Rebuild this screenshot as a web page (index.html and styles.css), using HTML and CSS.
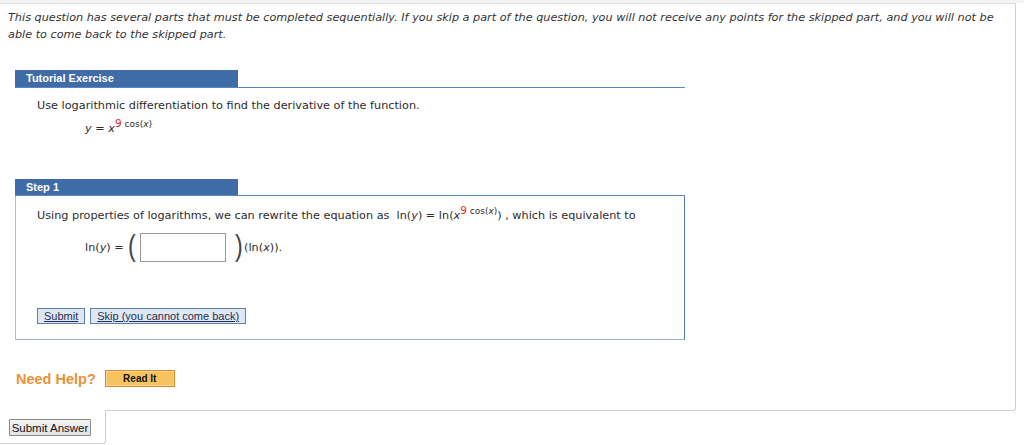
FILE: index.html
```html
<!DOCTYPE html>
<html>
<head>
<meta charset="utf-8">
<link rel="stylesheet" href="styles.css">
</head>
<body>
<div class="topstrip"></div>
<div class="question">
  <p class="notice">This question has several parts that must be completed sequentially. If you skip a part of the question, you will not receive any points for the skipped part, and you will not be able to come back to the skipped part.</p>

  <div class="section-head"><span class="tab">Tutorial Exercise</span></div>
  <div class="exercise">
    <p class="line">Use logarithmic differentiation to find the derivative of the function.</p>
    <p class="math"><i>y</i> = <i>x</i><sup><span class="red">9</span> cos(<i>x</i>)</sup></p>
  </div>

  <div class="section-head step-head"><span class="tab">Step 1</span></div>
  <div class="step-box">
    <p class="line">Using properties of logarithms, we can rewrite the equation as&nbsp; ln(<i>y</i>) = ln(<i>x</i><sup><span class="red">9</span> cos(<i>x</i>)</sup>) , which is equivalent to</p>
    <div class="eq-row">
      <span>ln(<i>y</i>) =</span>
      <span class="paren">(</span>
      <span class="answer-box"></span>
      <span class="paren">)</span><span>(ln(<i>x</i>)).</span>
    </div>
    <div class="step-buttons">
      <button class="blue-btn">Submit</button>
      <button class="blue-btn">Skip (you cannot come back)</button>
    </div>
  </div>

  <div class="help">
    <span class="need-help">Need Help?</span>
    <button class="read-it">Read It</button>
  </div>
</div>
<div class="answer-tab">
  <button class="submit-answer">Submit Answer</button>
</div>
</body>
</html>
```

FILE: styles.css
```css
html, body {
  margin: 0;
  padding: 0;
  background: #ffffff;
}
body {
  font-family: "DejaVu Sans", Verdana, sans-serif;
  font-size: 11.25px;
  color: #2b2b2b;
}
.topstrip {
  height: 3px;
  background: #f3f3f3;
}
.question {
  width: 1016px;
  box-sizing: border-box;
  border-top: 1px solid #dcdcdc;
  border-right: 1px solid #cfcfcf;
  border-bottom: 1px solid #cfcfcf;
  border-bottom-right-radius: 3px;
  padding-bottom: 23px;
}
.notice {
  margin: 0;
  padding: 5px 14px 0 8px;
  font-style: italic;
  line-height: 17px;
  color: #333;
}
.section-head {
  margin: 27px 0 0 15px;
  width: 670px;
  border-bottom: 1px solid #5b87c0;
  display: flex;
}
.tab {
  width: 212px;
  height: 17px;
  padding-left: 11px;
  background: #3f6ba6;
  color: #fff;
  font-family: "Liberation Sans", Arial, sans-serif;
  font-weight: bold;
  font-size: 11px;
  line-height: 17px;
}
.exercise {
  padding: 9px 0 0 37px;
}
.line {
  margin: 0;
  line-height: 17px;
}
.math {
  margin: 6px 0 0 48px;
  line-height: 17px;
}
sup {
  font-size: 9px;
  vertical-align: 5px;
  line-height: 0;
}
.red {
  color: #e32626;
  font-size: 10.5px;
}
.step-head {
  margin-top: 42px;
}
.step-head .tab {
  height: 16px;
  line-height: 16px;
}
.step-box {
  margin-left: 15px;
  width: 670px;
  box-sizing: border-box;
  border-left: 1px solid #a9bfdc;
  border-right: 1px solid #4c79b2;
  border-bottom: 1px solid #8fb0d8;
  padding: 11px 0 15px 21px;
}
.eq-row {
  display: flex;
  align-items: center;
  margin: 8px 0 0 48px;
  height: 30px;
}
.paren {
  font-family: "Liberation Sans", Arial, sans-serif;
  font-size: 29px;
  font-weight: normal;
  line-height: 30px;
  color: #444;
  transform: scaleX(0.8);
  margin: 0 0 2px 3px;
}
.answer-box {
  width: 84px;
  height: 27px;
  border: 1px solid #9a9a9a;
  background: #fff;
  margin: 0 5px 0 4px;
}
.step-buttons {
  margin-top: 46px;
  display: flex;
  gap: 5px;
}
.blue-btn {
  font-family: "Liberation Sans", Arial, sans-serif;
  font-size: 11px;
  color: #1f2f4f;
  text-decoration: underline;
  background: #dfe7f3;
  border: 1px solid #5d7fae;
  height: 16px;
  padding: 0 6px;
  line-height: 14px;
  margin: 0;
}
.help {
  margin: 30px 0 0 16px;
  display: flex;
  align-items: center;
  gap: 9px;
}
.need-help {
  font-family: "Liberation Sans", Arial, sans-serif;
  font-weight: bold;
  font-size: 14.5px;
  color: #e8923a;
}
.read-it {
  width: 70px;
  height: 17px;
  margin: 0;
  padding: 0;
  background: #f7c35f;
  border: 1px solid #d78a33;
  box-shadow: inset 0 0 0 1px #f9d68c;
  font-family: "Liberation Sans", Arial, sans-serif;
  font-weight: bold;
  font-size: 10px;
  color: #111;
}
.answer-tab {
  width: 106px;
  height: 34px;
  box-sizing: border-box;
  margin-top: -1px;
  background: #fff;
  border-right: 1px solid #cfcfcf;
  border-bottom: 1px solid #cfcfcf;
  border-bottom-right-radius: 3px;
  padding: 9px 0 0 9px;
}
.submit-answer {
  width: 82px;
  height: 17px;
  margin: 0;
  padding: 0;
  font-family: "Liberation Sans", Arial, sans-serif;
  font-size: 11.5px;
  color: #111;
  background: linear-gradient(#f4f4f4, #e2e2e2);
  border: 1px solid #8a8a8a;
  border-radius: 1px;
}
```
